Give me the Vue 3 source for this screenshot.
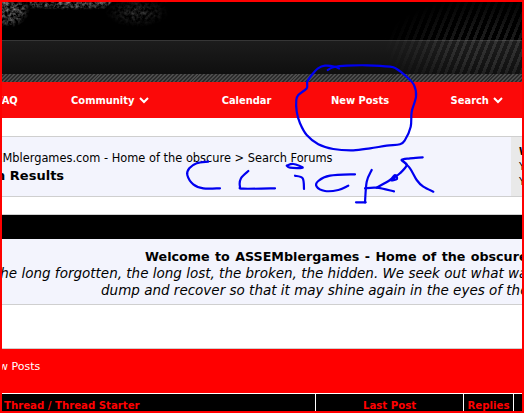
<script setup>
const navItems = [
  { label: 'FAQ', caret: false },
  { label: 'Community', caret: true },
  { label: 'Calendar', caret: false },
  { label: 'New Posts', caret: false },
  { label: 'Search', caret: true }
];

const columns = ['Thread / Thread Starter', 'Last Post', 'Replies', ''];

// hand drawn marks on top of the screenshot
const scribbles = [
  [[339, 68.5], [335, 66.7], [325, 65.7], [318, 68.3], [311.7, 75], [307.3, 81.7], [306.7, 88.3], [298.3, 95], [296.3, 100], [296.7, 111.7], [300, 123.3], [306.7, 135], [318.3, 144.3], [333.3, 149], [353.3, 150.3], [370, 148.3], [386.7, 145.7], [400, 144.3], [405, 140], [410.7, 126.7], [411.7, 111.7], [416, 96.7], [414, 85], [406.7, 76.7], [396.7, 69], [390, 66.7], [366.7, 65.3], [346.7, 65.7], [333.3, 67.3], [327.7, 70]],
  [[208.3, 161.7], [196.7, 163.3], [189.3, 168.3], [187.3, 175], [193.3, 184.3], [203.3, 188.3], [220, 188.3]],
  [[248.3, 171], [241, 178.3], [240, 186.7], [243.3, 188.7], [275, 188.3]],
  [[286.7, 165.7], [293.3, 164], [302.7, 167.7], [290, 167.7], [286.7, 165.7]],
  [[295, 175.7], [302.7, 178.3], [304, 189]],
  [[355, 174.3], [330, 175.7], [318.3, 181], [316.7, 186.7], [325, 191], [338.3, 190], [348.3, 185.7]],
  [[371.7, 170], [366.7, 181.7], [365, 202.3]],
  [[356, 202.3], [365.7, 202.3]],
  [[365, 188.3], [376.7, 187.7], [394, 191.3]],
  [[376.7, 187.7], [390, 180], [395, 175], [397, 179], [391, 180], [400, 173.3], [406.7, 165], [401.7, 160], [410, 158.3], [422.7, 157.3]],
  [[401.7, 160], [410, 168.3], [416.7, 180], [423.3, 186.7], [433.3, 191.7]]
];

// catmull-rom through the points, so the strokes stay round
const toPath = (pts) => {
  let d = `M${pts[0][0]} ${pts[0][1]}`;
  for (let i = 0; i < pts.length - 1; i++) {
    const p0 = pts[i - 1] || pts[i];
    const p1 = pts[i];
    const p2 = pts[i + 1];
    const p3 = pts[i + 2] || p2;
    const c1x = (p1[0] + (p2[0] - p0[0]) / 6).toFixed(1);
    const c1y = (p1[1] + (p2[1] - p0[1]) / 6).toFixed(1);
    const c2x = (p2[0] - (p3[0] - p1[0]) / 6).toFixed(1);
    const c2y = (p2[1] - (p3[1] - p1[1]) / 6).toFixed(1);
    d += ` C${c1x} ${c1y} ${c2x} ${c2y} ${p2[0]} ${p2[1]}`;
  }
  return d;
};

const scribblePaths = scribbles.map(toPath);
</script>

<template>
  <div class="frame">
    <header class="banner">
      <div class="banner-top"></div>
      <div class="banner-band"></div>
      <div class="banner-hatch"></div>
      <svg class="grunge" width="520" height="38" viewBox="0 0 520 38">
        <defs>
          <filter id="grain" x="0" y="0" width="100%" height="100%">
            <feTurbulence type="fractalNoise" baseFrequency="0.3" numOctaves="3" seed="8" />
            <feColorMatrix type="matrix" values="0 0 0 0 1  0 0 0 0 1  0 0 0 0 1  2 0 0 0 -0.65" />
          </filter>
          <radialGradient id="fadeA">
            <stop offset="0" stop-color="#999" />
            <stop offset="0.7" stop-color="#666" />
            <stop offset="1" stop-color="#000" />
          </radialGradient>
          <radialGradient id="fadeB">
            <stop offset="0" stop-color="#444" />
            <stop offset="1" stop-color="#000" />
          </radialGradient>
          <mask id="spots">
            <ellipse cx="70" cy="-2" rx="100" ry="10" fill="url(#fadeA)" />
            <ellipse cx="6" cy="6" rx="22" ry="20" fill="url(#fadeA)" />
            <ellipse cx="135" cy="10" rx="32" ry="15" fill="url(#fadeB)" />
          </mask>
        </defs>
        <rect width="520" height="38" filter="url(#grain)" mask="url(#spots)" />
      </svg>
    </header>

    <nav class="nav">
      <a v-for="item in navItems" :key="item.label" class="nav-item">
        {{ item.label }}
        <svg v-if="item.caret" class="caret" width="10" height="7" viewBox="0 0 10 7">
          <path d="M1 1l4 4 4-4" fill="none" stroke="#fff" stroke-width="2" />
        </svg>
      </a>
    </nav>

    <div class="gap gap-crumb"></div>

    <section class="crumb-panel">
      <div class="crumb-main">
        <div class="crumb-path">ASSEMblergames.com - Home of the obscure &gt; Search Forums</div>
        <div class="crumb-title">Search Results</div>
      </div>
      <div class="crumb-side">
        <strong>W</strong>
        <span>Y</span>
        <span>Y</span>
      </div>
    </section>

    <div class="gap gap-bar"></div>
    <div class="black-bar"></div>

    <section class="welcome">
      <div class="welcome-title">Welcome to ASSEMblergames - Home of the obscure</div>
      <div class="welcome-line line-one">the long forgotten, the long lost, the broken, the hidden. We seek out what was</div>
      <div class="welcome-line line-two">dump and recover so that it may shine again in the eyes of the</div>
    </section>

    <div class="gap gap-red"></div>

    <section class="red-block">
      <div class="red-link">New Posts</div>
    </section>

    <div class="thread-head">
      <div v-for="(col, index) in columns" :key="index" class="thread-col">{{ col }}</div>
    </div>

    <svg class="scribble" width="524" height="413" viewBox="0 0 524 413">
      <path v-for="(d, index) in scribblePaths" :key="index" :d="d" />
    </svg>
  </div>
</template>

<style scoped>
.frame {
  box-sizing: border-box;
  position: relative;
  width: 524px;
  height: 413px;
  border: 2px solid #ff0000;
  overflow: hidden;
  background: #fff;
  font-family: "DejaVu Sans", Verdana, sans-serif;
  color: #000;
}

.banner {
  position: relative;
  overflow: hidden;
}

.banner::after {
  content: "";
  position: absolute;
  left: 380px;
  right: 0;
  top: 0;
  bottom: 8px;
  background: repeating-linear-gradient(112deg, rgba(255, 255, 255, 0.1) 0 3px, transparent 3px 7px);
  -webkit-mask-image: radial-gradient(ellipse 110px 52px at 110px 46px, #000 30%, transparent 100%);
  mask-image: radial-gradient(ellipse 110px 52px at 110px 46px, #000 30%, transparent 100%);
}

.grunge {
  position: absolute;
  left: 0;
  top: 0;
}

.banner-top {
  height: 38px;
  background: #000;
}

.banner-band {
  height: 33px;
  border-top: 1px solid #363636;
  background: linear-gradient(#1c1c1c, #0f0f0f);
}

.banner-hatch {
  height: 8px;
  background: repeating-linear-gradient(135deg, #4d4d4d 0 1.4px, #2b2b2b 1.4px 2.8px);
}

.nav {
  display: grid;
  grid-template-columns: 38px 140px 133px 94px 140px;
  align-items: center;
  height: 36px;
  background: #fb0909;
}

.nav-item {
  display: block;
  color: #fff;
  font-family: "DejaVu Sans Condensed", "DejaVu Sans", sans-serif;
  font-size: 11px;
  font-weight: 700;
  text-align: center;
  white-space: nowrap;
}

.nav-item:first-child {
  margin-left: -28px;
}

.caret {
  margin-left: 1px;
}

.gap {
  background: #fff;
}

.gap-crumb {
  height: 18px;
}

.gap-bar {
  height: 17px;
}

.gap-red {
  height: 43px;
}

.crumb-panel {
  display: flex;
  height: 59px;
  border-top: 1px solid #cfcfcf;
  border-bottom: 1px solid #cfcfcf;
  background: #f3f4fd;
  overflow: hidden;
}

.crumb-main {
  width: 509px;
  flex: none;
  padding-top: 14px;
  overflow: hidden;
}

.crumb-path {
  margin-left: -29px;
  font-size: 11.4px;
  white-space: nowrap;
}

.crumb-title {
  margin-top: 3px;
  margin-left: -47px;
  font-size: 13px;
  font-weight: 700;
  white-space: nowrap;
}

.crumb-side {
  flex: 1;
  display: flex;
  flex-direction: column;
  gap: 3px;
  padding: 9px 0 0 8px;
  background: #e9e9e9;
  font-size: 10px;
  line-height: 12px;
}

.black-bar {
  height: 24px;
  border-top: 1px solid #cfcfcf;
  background: #000;
}

.welcome {
  box-sizing: border-box;
  height: 66px;
  padding-top: 9px;
  border-bottom: 1px solid #cfcfcf;
  background: #f3f4fd;
  white-space: nowrap;
  overflow: hidden;
}

.welcome-title {
  margin-left: 143px;
  font-size: 12.7px;
  font-weight: 700;
  line-height: 17px;
  word-spacing: 1px;
}

.welcome-line {
  font-size: 13.5px;
  font-style: italic;
  line-height: 17px;
}

.line-one {
  margin-left: -7px;
}

.line-two {
  margin-left: 99px;
}

.red-block {
  box-sizing: border-box;
  height: 45px;
  padding-top: 11px;
  border-top: 1px solid #cfcfcf;
  background: #ff0000;
}

.red-link {
  margin-left: -18px;
  color: #fff;
  font-size: 11px;
  line-height: 14px;
}

.thread-head {
  display: grid;
  grid-template-columns: 314px 148px 50px 1fr;
  height: 20px;
  border-top: 1px solid #fff;
  background: #000;
}

.thread-col {
  padding-top: 5px;
  border-right: 1px solid #fff;
  color: #ff0000;
  font-family: "DejaVu Sans Condensed", "DejaVu Sans", sans-serif;
  font-size: 11.3px;
  font-weight: 700;
  line-height: 14px;
  text-align: center;
  white-space: nowrap;
}

.thread-col:first-child {
  padding-left: 2px;
  text-align: left;
}

.thread-col:last-child {
  border-right: 0;
}

.scribble {
  position: absolute;
  left: -2px;
  top: -2px;
  pointer-events: none;
}

.scribble path {
  fill: none;
  stroke: #0000f0;
  stroke-width: 2.2;
  stroke-linecap: round;
  stroke-linejoin: round;
}
</style>
